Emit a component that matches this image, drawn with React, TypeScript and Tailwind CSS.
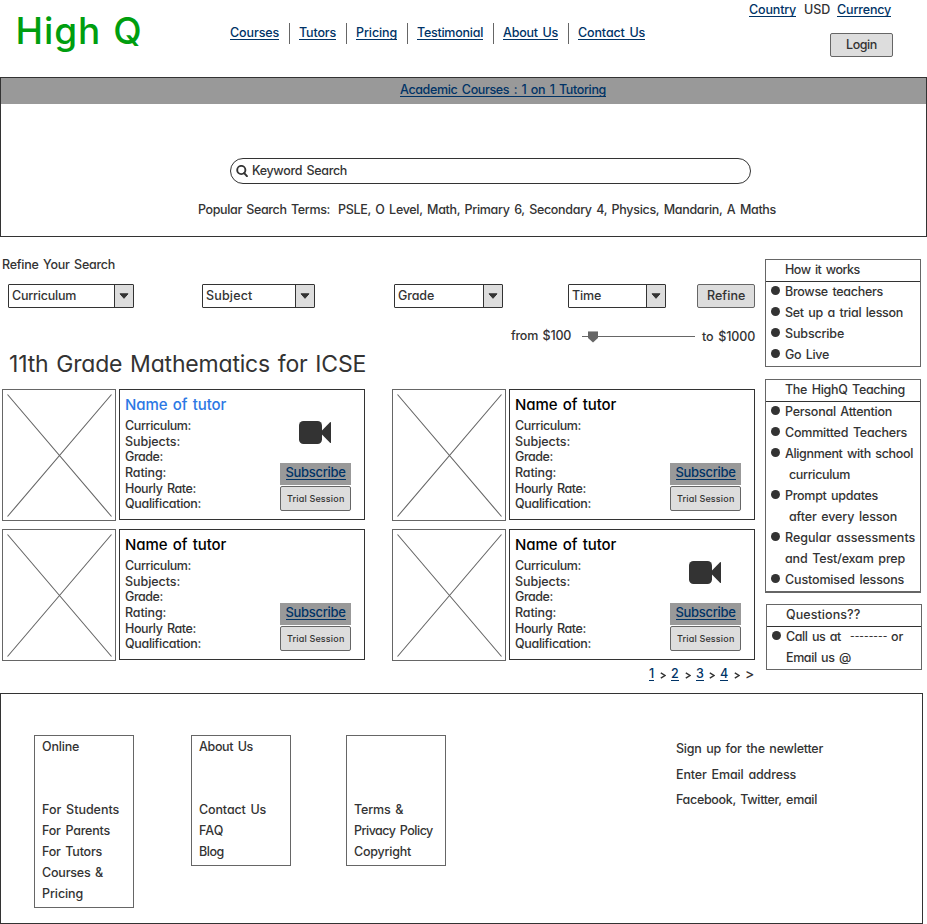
import { useLayoutEffect, useRef, useState } from 'react';
import type { ReactNode } from 'react';

/** A single line of text whose tracking is adjusted so that it fills `w` pixels. */
function T({ w, children, className = '' }: { w: number; children: string; className?: string }) {
  const ref = useRef<HTMLSpanElement>(null);
  const [tracking, setTracking] = useState(0);
  useLayoutEffect(() => {
    const el = ref.current;
    if (!el) return;
    el.style.letterSpacing = '0px';
    const natural = el.getBoundingClientRect().width;
    const next = (w + 0.3 - natural) / Math.max(1, children.length - 1);
    el.style.letterSpacing = `${next}px`;
    setTracking(next);
  }, [w, children]);
  return (
    <span className={`block shrink-0 whitespace-pre ${className}`} style={{ width: w }}>
      <span ref={ref} className="inline-block align-top" style={{ letterSpacing: tracking }}>
        {children}
      </span>
    </span>
  );
}

function Link({ w, children }: { w: number; children: string }) {
  return (
    <a className="block h-[15px] shrink-0 border-b border-[#003366] leading-[15px] text-[#003366]">
      <T w={w}>{children}</T>
    </a>
  );
}

const nav: [string, number][] = [
  ['Courses', 49],
  ['Tutors', 37],
  ['Pricing', 41],
  ['Testimonial', 66],
  ['About Us', 55],
  ['Contact Us', 67],
];

function Header() {
  return (
    <header className="flex h-[77px]">
      <div className="w-[230px] pt-[10px] pl-[15.5px] text-[37px] leading-[42px] font-medium text-[#009e0f]">
        <T w={126}>High Q</T>
      </div>
      <nav className="mt-[23px] flex h-[21px] w-[519px]">
        {nav.map(([label, w], i) => (
          <div key={label} className={i ? 'flex border-l border-[#666] pt-[2px] pr-[10px] pl-[9px]' : 'flex pt-[2px] pr-[10px]'}>
            <Link w={w}>{label}</Link>
          </div>
        ))}
      </nav>
      <div className="pt-[2px]">
        <div className="flex leading-[15px]">
          <Link w={47}>Country</Link>
          <T w={26} className="mr-[7px] ml-2">USD</T>
          <Link w={54}>Currency</Link>
        </div>
        <button className="mt-4 ml-[81px] flex h-6 w-[63px] justify-center rounded-[2px] border border-[#666] bg-[#ddd] leading-[22px]">
          <T w={31}>Login</T>
        </button>
      </div>
    </header>
  );
}

function Banner() {
  return (
    <section className="h-[160px] border border-[#333]">
      <div className="flex h-[26px] bg-[#999] pt-1 pl-[399px]">
        <Link w={206}>Academic Courses : 1 on 1 Tutoring</Link>
      </div>
      <div className="mt-[54px] ml-[229px] flex h-[26px] w-[521px] items-center rounded-full border border-[#333] pl-[5px] leading-6">
        <svg className="mr-1 h-3 w-3" viewBox="0 0 12 12" fill="none" stroke="#333">
          <circle cx="5.300" cy="5" r="4.100" strokeWidth="1.9" />
          <path d="M8.200 8.200l2.700 3" strokeWidth="2" strokeLinecap="round" />
        </svg>
        <T w={95}>Keyword Search</T>
      </div>
      <div className="mt-[15px] flex pl-[197px] leading-[21px]">
        <T w={132}>Popular Search Terms:</T>
        <T w={438} className="ml-[8px]">PSLE, O Level, Math, Primary 6, Secondary 4, Physics, Mandarin, A Maths</T>
      </div>
    </section>
  );
}

function Select({ label, w, box }: { label: string; w: number; box: string }) {
  return (
    <div className={`flex h-6 justify-between rounded-[1px] border border-[#333] pl-[3px] leading-[22px] ${box}`}>
      <T w={w}>{label}</T>
      <span className="flex w-[19px] items-center justify-center border-l border-[#333] bg-[#ddd]">
        <svg className="h-[6px] w-[10px]" viewBox="0 0 10 6">
          <path d="M1 .8h8L5 5.300z" fill="#333" stroke="#333" strokeLinejoin="round" />
        </svg>
      </span>
    </div>
  );
}

function Filters() {
  return (
    <div>
      <div className="pt-[17px] pl-[2px] leading-[21px]">
        <T w={113}>Refine Your Search</T>
      </div>
      <div className="mt-[9px] flex pl-2">
        <Select label="Curriculum" w={64} box="w-[126px]" />
        <Select label="Subject" w={46} box="ml-[68px] w-[113px]" />
        <Select label="Grade" w={36} box="ml-[79px] w-[109px]" />
        <Select label="Time" w={29} box="ml-[65px] w-[98px]" />
        <button className="ml-[31px] flex h-6 w-[58px] justify-center rounded-[2px] border border-[#666] bg-[#ddd] leading-[22px]">
          <T w={38}>Refine</T>
        </button>
      </div>
      <div className="mt-[17px] flex h-[21px] pl-[511px] leading-[21px]">
        <T w={60}>from $100</T>
        <svg className="ml-[11px] h-[21px] w-[113px]" viewBox="0 0 113 21">
          <path d="M0 11.500h113" stroke="#666" />
          <path d="M6 6h10v7l-5 4.500L6 13z" fill="#666" />
          <path d="M6 6.500h10" stroke="#aaa" />
        </svg>
        <T w={53} className="ml-[7px] pt-px">to $1000</T>
      </div>
      <h1 className="mt-1 mb-[-1px] pl-[9px] text-[23px] leading-[28px] font-normal">
        <T w={357}>11th Grade Mathematics for ICSE</T>
      </h1>
    </div>
  );
}

const fields: [string, number][] = [
  ['Curriculum:', 66],
  ['Subjects:', 55],
  ['Grade:', 38],
  ['Rating:', 41],
  ['Hourly Rate:', 71],
  ['Qualification:', 76],
];

function TutorCard({ active, video }: { active?: boolean; video?: boolean }) {
  return (
    <article className="flex h-[132px] gap-[3px]">
      <svg className="h-[132px] w-[114px] border border-[#666]" viewBox="0 0 112 130" stroke="#666">
        <path d="M4.500 4.500L108.500 126.500M108.500 4.500L4.500 126.500" strokeWidth="1.1" />
      </svg>
      <div className="flex h-[131px] w-[246px] border border-[#333] pl-[5px]">
        <div className="w-[155px]">
          <h2 className={`pt-1 text-[15px] leading-[22px] ${active ? 'text-[#2b78e4]' : 'text-black'}`}>
            <T w={101}>Name of tutor</T>
          </h2>
          <div className="pt-[2.3px] leading-[15.6px]">
            {fields.map(([label, w]) => (
              <T key={label} w={w}>{label}</T>
            ))}
          </div>
        </div>
        <div className="w-[71px] pt-[31px]">
          <div className="h-[42px] pl-[19px]">
            {video && (
              <svg className="h-[23px] w-8" viewBox="0 0 32 23" fill="#333">
                <rect x="0" y="0" width="23" height="23" rx="4.500" />
                <path d="M21 11.500L31 1.200Q32 .5 32 1.500V21.500Q32 22.500 31 21.800z" />
              </svg>
            )}
          </div>
          <div className="flex h-[22px] justify-center bg-[#999] pt-[2px] text-[13px]">
            <Link w={60}>Subscribe</Link>
          </div>
          <button className="mt-px flex h-[25px] w-[71px] justify-center rounded-[2px] border border-[#666] bg-[#ddd] text-[9px] leading-[23px]">
            <T w={57}>Trial Session</T>
          </button>
        </div>
      </div>
    </article>
  );
}

function Chevron({ className }: { className: string }) {
  return (
    <svg className={`h-[7px] w-[6px] ${className}`} viewBox="0 0 6 7" fill="none" stroke="#333" strokeWidth="1.4">
      <path d="M.8.8L5 3.500.8 6.200" />
    </svg>
  );
}

function Pagination() {
  return (
    <div className="flex h-[15px] w-full pl-[649px]">
      <Link w={5}>1</Link>
      <Chevron className="mt-[6px] mr-[5px] ml-[6px]" />
      <Link w={8}>2</Link>
      <Chevron className="mt-[6px] mr-[5px] ml-[6px]" />
      <Link w={8}>3</Link>
      <Chevron className="mt-[6px] mr-[5px] ml-[5px]" />
      <Link w={8}>4</Link>
      <Chevron className="mt-[6px] mr-[5px] ml-[6px]" />
      <T w={9} className="text-[14px] leading-[16px]">&gt;</T>
    </div>
  );
}

interface Line {
  text: string;
  w: number;
  bullet?: boolean;
  indent?: boolean;
}

function Panel({ title, w, lines, box, children }: { title: string; w: number; lines: Line[]; box: string; children?: ReactNode }) {
  return (
    <section className={`w-[156px] border border-[#666] leading-[19px] ${box}`}>
      <div className="h-[22px] border-b border-[#333] pl-[19px]">
        <T w={w}>{title}</T>
      </div>
      {children}
      {lines.map((l) => (
        <div key={l.text} className="flex h-[21px]">
          <span className="w-[19px] pt-[4px] pl-[5px]">
            {l.bullet && <span className="block h-[9px] w-[9px] rounded-full bg-[#333]" />}
          </span>
          <T w={l.w} className={l.indent ? 'ml-[4px]' : ''}>{l.text}</T>
        </div>
      ))}
    </section>
  );
}

function Sidebar() {
  return (
    <aside className="ml-[10px] pt-[22px]">
      <Panel
        title="How it works"
        w={75}
        box="h-[108px]"
        lines={[
          { text: 'Browse teachers', w: 98, bullet: true },
          { text: 'Set up a trial lesson', w: 118, bullet: true },
          { text: 'Subscribe', w: 59, bullet: true },
          { text: 'Go Live', w: 44, bullet: true },
        ]}
      />
      <Panel
        title="The HighQ Teaching"
        w={120}
        box="mt-3 h-[214px] border-b-2"
        lines={[
          { text: 'Personal Attention', w: 107, bullet: true },
          { text: 'Committed Teachers', w: 122, bullet: true },
          { text: 'Alignment with school', w: 128, bullet: true },
          { text: 'curriculum', w: 61, indent: true },
          { text: 'Prompt updates', w: 93, bullet: true },
          { text: 'after every lesson', w: 108, indent: true },
          { text: 'Regular assessments', w: 130, bullet: true },
          { text: 'and Test/exam prep', w: 120 },
          { text: 'Customised lessons', w: 119, bullet: true },
        ]}
      />
      <Panel title="Questions??" w={74} box="mt-[11px] ml-px h-[66px]" lines={[{ text: 'Email us @', w: 65 }]}>
        <div className="flex h-[21px]">
          <span className="w-[19px] pt-[4px] pl-[5px]">
            <span className="block h-[9px] w-[9px] rounded-full bg-[#333]" />
          </span>
          <T w={55}>Call us at</T>
          <T w={37} className="ml-[9px] text-[10px]">--------</T>
          <T w={12} className="ml-[4px]">or</T>
        </div>
      </Panel>
    </aside>
  );
}

function FooterBox({ lines, box }: { lines: [string, number][]; box: string }) {
  return (
    <div className={`w-[100px] border border-[#666] pl-[7px] leading-[21px] ${box}`}>
      {lines.map(([text, w], i) => (
        <div key={i} className="h-[21px]">
          {text && <T w={w}>{text}</T>}
        </div>
      ))}
    </div>
  );
}

function Footer() {
  return (
    <footer className="flex h-[231px] w-[923px] items-start border border-[#333] pt-[41px] pl-[33px]">
      <FooterBox
        box="h-[173px]"
        lines={[['Online', 37], ['', 0], ['', 0], ['For Students', 77], ['For Parents', 68], ['For Tutors', 60], ['Courses &', 61], ['Pricing', 41]]}
      />
      <FooterBox box="ml-[57px] h-[131px]" lines={[['About Us', 54], ['', 0], ['', 0], ['Contact Us', 67], ['FAQ', 24], ['Blog', 25]]} />
      <FooterBox box="ml-[55px] h-[131px]" lines={[['', 0], ['', 0], ['', 0], ['Terms &', 49], ['Privacy Policy', 79], ['Copyright', 57]]} />
      <div className="ml-[230px] pt-px leading-[25.6px]">
        <T w={147}>Sign up for the newletter</T>
        <T w={120}>Enter Email address</T>
        <T w={141}>Facebook, Twitter, email</T>
      </div>
    </footer>
  );
}

export default function App() {
  return (
    <div className="h-[924px] w-[927px] overflow-hidden bg-white font-['Inter','Liberation_Sans',sans-serif] text-[12.5px] font-[450] text-[#333] [font-feature-settings:'cv11'] [word-spacing:0.12em]">
      <Header />
      <Banner />
      <div className="flex h-[456px]">
        <main className="w-[755px]">
          <Filters />
          <div className="mt-[12px] mb-[5px] grid grid-cols-[363px_363px] gap-x-[27px] gap-y-2 pl-[2px]">
            <TutorCard active video />
            <TutorCard />
            <TutorCard />
            <TutorCard video />
          </div>
          <Pagination />
        </main>
        <Sidebar />
      </div>
      <Footer />
    </div>
  );
}
